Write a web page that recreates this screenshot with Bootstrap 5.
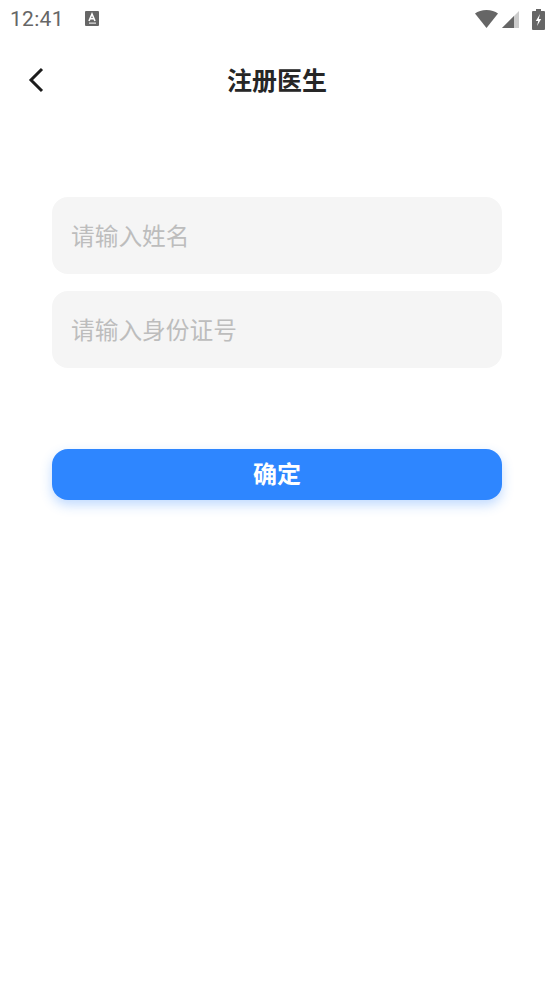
<!DOCTYPE html>
<html lang="zh-CN">
<head>
<meta charset="utf-8">
<title>注册医生</title>
<link rel="stylesheet" href="https://cdn.jsdelivr.net/npm/bootstrap@5.3.0/dist/css/bootstrap.min.css">
<style>
html,body{margin:0;background:#fff;height:984px;overflow:hidden}
body{font-family:"Noto Sans CJK SC","Noto Sans",sans-serif}
.sbar{height:38px;padding:0 9px 0 10px;color:#666}
.clock{font-family:Roboto,sans-serif;font-size:21px;line-height:38px;width:75px;letter-spacing:.3px}
.sicons{gap:4px}
.topbar{height:84px;display:grid;grid-template-columns:1fr auto 1fr;align-items:center}
.back{padding-left:27px;line-height:0;display:block}
.ttl{font-size:25px;font-weight:700;color:#262626;line-height:1;padding-bottom:2px}
.formwrap{padding:75px 52px 0}
.fld{height:77px;background:#f5f5f5;border:0;border-radius:16px;font-size:23.7px;padding:0 20px 1px 19px;color:#333;box-shadow:none}
.fld::placeholder{color:#bdbdbd;opacity:1}
.fld:focus{background:#f5f5f5;box-shadow:none}
.fld+.fld{margin-top:17px}
.okbtn{display:block;width:100%;margin-top:81px;height:51px;padding:0 0 3px;border:0;border-radius:16px;background:#2e86ff;color:#fff;font-size:24px;font-weight:700;line-height:1;box-shadow:0 5px 12px rgba(46,134,255,.3)}
.okbtn:hover,.okbtn:active{background:#2e86ff!important;color:#fff!important}
</style>
</head>
<body>
<div class="sbar d-flex align-items-center">
  <span class="clock">12:41</span>
  <svg width="14" height="16" viewBox="0 0 14 16"><rect width="14" height="15" rx="1" fill="#666"/><path d="M4 10 7 3l3 7M5.200 7.800h3.600" fill="none" stroke="#fff" stroke-width="1.600"/><rect x="4" y="11.600" width="7" height="1" fill="#fff"/></svg>
  <div class="ms-auto d-flex align-items-center sicons">
    <svg width="23" height="18" viewBox="0 0 24 18" preserveAspectRatio="none"><path d="M0 3.500C3 1.200 7.300 0 12 0s9 1.200 12 3.500L12 18z" fill="#666"/></svg>
    <svg width="18" height="18" viewBox="0 0 18 18"><path d="M0 18 17 1v17z" fill="#ccc"/><path d="M0 18 12 6v12z" fill="#666"/></svg>
    <svg width="13" height="21" viewBox="0 0 13 21" class="ms-2"><path d="M4 0h5v2h3a1 1 0 0 1 1 1v17a1 1 0 0 1-1 1H1a1 1 0 0 1-1-1V3a1 1 0 0 1 1-1h3z" fill="#666"/><path d="M8 5 3.800 12h2.400L5 17l4.200-7H6.800z" fill="#fff"/></svg>
  </div>
</div>
<div class="topbar">
  <a class="back" href="#" aria-label="返回"><svg width="18" height="26" viewBox="0 0 18 26"><path d="M15 2 4 13l11 11" fill="none" stroke="#1d1d1d" stroke-width="3"/></svg></a>
  <div class="ttl">注册医生</div>
  <div></div>
</div>
<form class="formwrap">
  <input class="form-control fld" placeholder="请输入姓名">
  <input class="form-control fld" placeholder="请输入身份证号">
  <button type="button" class="btn okbtn">确定</button>
</form>
<script src="https://cdn.jsdelivr.net/npm/bootstrap@5.3.0/dist/js/bootstrap.bundle.min.js"></script>
</body>
</html>
